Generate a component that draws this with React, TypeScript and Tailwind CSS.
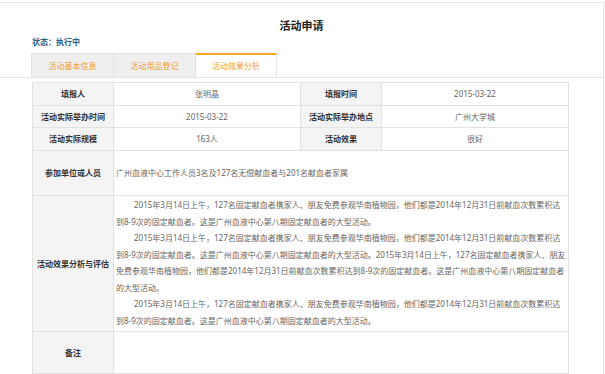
const para =
  "2015年3月14日上午，127名固定献血者携家人、朋友免费参观华南植物园，他们都是2014年12月31日前献血次数累积达到8-9次的固定献血者。这是广州血液中心第八期固定献血者的大型活动。";

const tabs = [
  { label: "活动基本信息", active: false },
  { label: "活动用品登记", active: false },
  { label: "活动效果分析", active: true },
];

function Label({ children }: { children: React.ReactNode }) {
  return (
    <td className="border border-[#e2e2e2] bg-[#f4f4f4] text-center align-middle font-bold text-[#333]">
      {children}
    </td>
  );
}

function Value({ children }: { children: React.ReactNode }) {
  return <td className="border border-[#e2e2e2] bg-white text-center align-middle text-[#666]">{children}</td>;
}

export default function App() {
  return (
    <div className="h-[374px] w-[605px] overflow-hidden bg-white pt-[2px] font-['Noto_Sans','Noto_Sans_CJK_SC',sans-serif] text-[8px] leading-[12px]">
      <div className="h-full w-[604px] border-t border-r border-[#e6e6e6]">
        <h1 className="pt-[16px] text-center text-[11px] leading-[14px] font-bold text-[#222]">活动申请</h1>
        <p className="mt-[3px] pl-[32px] text-[8px] leading-[12px] font-bold text-[#2b5f8a]">状态：执行中</p>

        <div className="mt-[5px] flex border-b border-[#e4e4e4] pl-[31px]">
          {tabs.map((t) =>
            t.active ? (
              <div
                key={t.label}
                className="-mb-px flex h-[24px] w-[82px] items-center justify-center border-x border-t-2 border-x-[#e2e2e2] border-t-[#f5a623] bg-white text-[#f39c1e]"
              >
                {t.label}
              </div>
            ) : (
              <div
                key={t.label}
                className="flex h-[24px] w-[82px] items-center justify-center border-t border-l border-[#e2e2e2] bg-[#efefef] text-[#f39c1e]"
              >
                {t.label}
              </div>
            )
          )}
        </div>

        <table className="mt-[4px] ml-[32px] w-[536px] table-fixed border-collapse">
          <colgroup>
            <col className="w-[81px]" />
            <col className="w-[187px]" />
            <col className="w-[81px]" />
            <col className="w-[187px]" />
          </colgroup>
          <tbody>
            <tr className="h-[23px]">
              <Label>填报人</Label>
              <Value>张明晶</Value>
              <Label>填报时间</Label>
              <Value>2015-03-22</Value>
            </tr>
            <tr className="h-[22px]">
              <Label>活动实际举办时间</Label>
              <Value>2015-03-22</Value>
              <Label>活动实际举办地点</Label>
              <Value>广州大学城</Value>
            </tr>
            <tr className="h-[23px]">
              <Label>活动实际规模</Label>
              <Value>163人</Value>
              <Label>活动效果</Label>
              <Value>很好</Value>
            </tr>
            <tr className="h-[45px]">
              <Label>参加单位或人员</Label>
              <td colSpan={3} className="border border-[#e2e2e2] pl-[2px] align-middle text-[#666]">
                广州血液中心工作人员3名及127名无偿献血者与201名献血者家属
              </td>
            </tr>
            <tr className="h-[136px]">
              <Label>活动效果分析与评估</Label>
              <td
                colSpan={3}
                className="border border-[#e2e2e2] pt-[1px] pr-[2px] pb-[2px] pl-[2px] align-top leading-[16.5px] text-[#666]"
              >
                <p className="indent-[18px]">{para}</p>
                <p className="indent-[18px]">
                  {para}
                  {para}
                </p>
                <p className="indent-[18px]">{para}</p>
              </td>
            </tr>
            <tr className="h-[42px]">
              <Label>备注</Label>
              <td colSpan={3} className="border border-[#e2e2e2]" />
            </tr>
          </tbody>
        </table>
      </div>
    </div>
  );
}
